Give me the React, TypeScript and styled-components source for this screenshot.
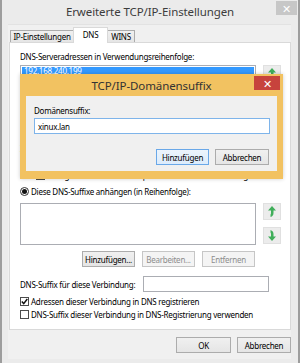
import React from "react";
import styled, { createGlobalStyle, css } from "styled-components";

const Global = createGlobalStyle`
  html, body { margin: 0; padding: 0; background: #ffffff; }
  * { box-sizing: border-box; }
`;

const FONT = `"Noto Sans", "Open Sans", sans-serif`;

const Stage = styled.div`
  position: relative;
  width: 300px;
  height: 363px;
  overflow: hidden;
  font-family: ${FONT};
  font-size: 8px;
  letter-spacing: -0.25px;
  color: #000;
`;

const Window = styled.div`
  width: 300px;
  height: 363px;
  background: #ebebeb;
  border-left: 2px solid #9d9d9d;
  border-right: 2px solid #9d9d9d;
  display: flex;
  flex-direction: column;
`;

const TitleBar = styled.div`
  height: 24px;
  flex: none;
  display: grid;
  grid-template-columns: 1fr auto 1fr;
  align-items: start;
`;

const Title = styled.div`
  grid-column: 2;
  padding-top: 4px;
  font-size: 11.5px;
  letter-spacing: -0.1px;
  line-height: 15px;
  color: #3c3c3c;
`;

const CloseBtn = styled.div<{ $active?: boolean }>`
  justify-self: end;
  display: flex;
  align-items: center;
  justify-content: center;
  color: #fff;
  font-size: 11px;
  line-height: 1;
  ${(p) =>
    p.$active
      ? css`
          width: 26px;
          height: 14px;
          margin: 2px 3px 0 0;
          background: #c7433d;
        `
      : css`
          width: 21px;
          height: 14px;
          margin: 1px 1px 0 0;
          background: #c7c7c7;
        `}
`;

const Client = styled.div`
  flex: 1;
  margin: 0 7px 4px 6px;
  background: #f0f0f0;
  border-top: 1px solid #e2e2e2;
  padding: 2px 0 0 1px;
  display: flex;
  flex-direction: column;
`;

const TabStrip = styled.div`
  height: 15px;
  display: flex;
  align-items: flex-end;
  padding-left: 1px;
  position: relative;
  z-index: 1;
`;

const Tab = styled.div<{ $selected?: boolean; $w: number }>`
  display: flex;
  align-items: center;
  justify-content: center;
  width: ${(p) => p.$w}px;
  border: 1px solid #d9d9d9;
  border-bottom: none;
  ${(p) =>
    p.$selected
      ? css`
          height: 16px;
          margin: 0 -1px -1px;
          padding-bottom: 2px;
          background: #fff;
          position: relative;
          z-index: 2;
        `
      : css`
          height: 12px;
          background: linear-gradient(#f0f0f0, #e5e5e5);
          border-color: #acacac;
        `}
`;

const Panel = styled.div`
  height: 288px;
  width: 282px;
  background: #fff;
  border: 1px solid #d9d9d9;
  padding: 0 0 0 10px;
  display: flex;
  flex-direction: column;
`;

const Text = styled.div<{ $top?: number; $disabled?: boolean; $w?: number }>`
  margin-top: ${(p) => p.$top ?? 0}px;
  line-height: 11px;
  height: 11px;
  white-space: nowrap;
  ${(p) => (p.$w ? `width: ${p.$w}px;` : "")}
  color: ${(p) => (p.$disabled ? "#8a8a8a" : "#000")};
`;

const Paragraph = styled.div<{ $top?: number }>`
  margin-top: ${(p) => p.$top ?? 0}px;
  width: 258px;
  height: 22px;
  line-height: 11px;
`;

const Row = styled.div<{ $top?: number; $indent?: number }>`
  display: flex;
  align-items: center;
  margin-top: ${(p) => p.$top ?? 0}px;
  margin-left: ${(p) => p.$indent ?? 0}px;
`;

const ListRow = styled.div<{ $top?: number }>`
  display: flex;
  margin-top: ${(p) => p.$top ?? 0}px;
  gap: 7px;
`;

const ListBox = styled.div<{ $h: number }>`
  width: 236px;
  height: ${(p) => p.$h}px;
  border: 1px solid #abadb3;
  background: #fff;
  padding: 1px;
`;

const ListItem = styled.div<{ $selected?: boolean }>`
  height: 8px;
  line-height: 8px;
  padding-left: 2px;
  font-size: 8px;
  color: ${(p) => (p.$selected ? "#fff" : "#000")};
  background: ${(p) => (p.$selected ? "#3399ff" : "transparent")};
`;

const ArrowCol = styled.div`
  display: flex;
  flex-direction: column;
  gap: 7px;
`;

const ArrowBtn = styled.div`
  width: 18px;
  height: 17px;
  background: #ececec;
  border: 1px solid #e0e0e0;
  display: flex;
  align-items: center;
  justify-content: center;
`;

const ButtonRow = styled.div<{ $top?: number; $left?: number }>`
  display: flex;
  gap: 7px;
  margin-top: ${(p) => p.$top ?? 0}px;
  margin-left: ${(p) => p.$left ?? 0}px;
`;

const Button = styled.div<{ $focused?: boolean; $disabled?: boolean; $w?: number }>`
  width: ${(p) => p.$w ?? 53}px;
  height: 16px;
  display: flex;
  align-items: center;
  justify-content: center;
  white-space: nowrap;
  border: 1px solid ${(p) => (p.$focused ? "#6aa8e8" : p.$disabled ? "#c6c6c6" : "#acacac")};
  background: ${(p) =>
    p.$disabled ? "#f4f4f4" : p.$focused ? "linear-gradient(#ecf4fc, #dcecfc)" : "linear-gradient(#f0f0f0, #e5e5e5)"};
  color: ${(p) => (p.$disabled ? "#8d8d8d" : "#000")};
`;

const Check = styled.div`
  width: 9px;
  height: 9px;
  border: 1px solid #4c4c4c;
  background: #fff;
  margin-right: 2px;
  display: flex;
  align-items: center;
  justify-content: center;
`;

const Radio = styled.div<{ $checked?: boolean }>`
  width: 9px;
  height: 9px;
  border-radius: 50%;
  border: 1px solid #333;
  background: #fff;
  margin-right: 2px;
  display: flex;
  align-items: center;
  justify-content: center;
  &::after {
    content: "";
    width: 5px;
    height: 5px;
    border-radius: 50%;
    background: ${(p) => (p.$checked ? "#111" : "transparent")};
  }
`;

const Input = styled.div<{ $w: number; $focused?: boolean; $top?: number }>`
  width: ${(p) => p.$w}px;
  height: 16px;
  margin-top: ${(p) => p.$top ?? 0}px;
  border: 1px solid ${(p) => (p.$focused ? "#7eb4ea" : "#abadb3")};
  background: #fff;
  display: flex;
  align-items: center;
  padding-left: 3px;
`;

const Footer = styled.div`
  display: flex;
  justify-content: flex-end;
  gap: 6px;
  padding-top: 7px;
  width: 282px;
`;

/* popup dialog */
const Popup = styled.div`
  position: absolute;
  left: 20px;
  top: 74px;
  width: 263px;
  height: 105px;
  background: #f2c261;
  display: flex;
  flex-direction: column;
  box-shadow: 0 0 4px rgba(0, 0, 0, 0.2);
`;

const PopupTitleBar = styled.div`
  height: 22px;
  flex: none;
  display: grid;
  grid-template-columns: 1fr auto 1fr;
  align-items: start;
`;

const PopupTitle = styled.div`
  grid-column: 2;
  padding-top: 4px;
  font-size: 11.5px;
  letter-spacing: -0.1px;
  line-height: 15px;
  color: #333;
`;

const PopupClient = styled.div`
  flex: 1;
  margin: 0 6px 8px 6px;
  background: #f0f0f0;
  padding: 5px 7px 0 8px;
  display: flex;
  flex-direction: column;
`;

const PopupButtons = styled.div`
  display: flex;
  justify-content: flex-end;
  gap: 6px;
  margin-top: 15px;
  padding-right: 1px;
`;

const UpArrow = () => (
  <svg width="8" height="11" viewBox="0 0 8 11">
    <path d="M4 0 L8 4.5 L5.5 4.5 L5.5 7 Q5.5 10 2.5 11 L2.5 8.5 Q3 8 3 7 L3 4.5 L0 4.5 Z" fill="#3fae5a" />
  </svg>
);

const DownArrow = () => (
  <svg width="8" height="11" viewBox="0 0 8 11">
    <path d="M4 11 L8 6.5 L5.5 6.5 L5.5 4 Q5.5 1 2.5 0 L2.5 2.5 Q3 3 3 4 L3 6.5 L0 6.5 Z" fill="#3fae5a" />
  </svg>
);

const Tick = () => (
  <svg width="7" height="7" viewBox="0 0 7 7">
    <path d="M0.8 3.6 L2.7 5.6 L6.3 1" stroke="#111" strokeWidth="1.5" fill="none" />
  </svg>
);

export default function App() {
  return (
    <Stage>
      <Global />
      <Window>
        <TitleBar>
          <Title>Erweiterte TCP/IP-Einstellungen</Title>
          <CloseBtn>✕</CloseBtn>
        </TitleBar>
        <Client>
          <TabStrip>
            <Tab $w={64}>IP-Einstellungen</Tab>
            <Tab $w={35} $selected>
              DNS
            </Tab>
            <Tab $w={28}>WINS</Tab>
          </TabStrip>
          <Panel>
            <Text $top={8}>DNS-Serveradressen in Verwendungsreihenfolge:</Text>
            <ListRow $top={3}>
              <ListBox $h={44}>
                <ListItem $selected>192.168.240.199</ListItem>
              </ListBox>
              <ArrowCol>
                <ArrowBtn>
                  <UpArrow />
                </ArrowBtn>
                <ArrowBtn>
                  <DownArrow />
                </ArrowBtn>
              </ArrowCol>
            </ListRow>
            <ButtonRow $top={4} $left={62}>
              <Button>Hinzufügen...</Button>
              <Button $disabled>Bearbeiten...</Button>
              <Button $disabled>Entfernen</Button>
            </ButtonRow>
            <Paragraph $top={3}>
              Die folgenden drei Einstellungen gelten für alle Verbindungen mit TCP/IP. Zur Auflösung
              unqualifizierter Namen:
            </Paragraph>
            <Row $top={2}>
              <Radio />
              <Text>Primäre und verbindungsspezifische DNS-Suffixe anhängen</Text>
            </Row>
            <Row $top={3} $indent={16}>
              <Check />
              <Text>Übergeordnete Suffixe der primären DNS-Suffixe anhängen</Text>
            </Row>
            <Row $top={5}>
              <Radio $checked />
              <Text>Diese DNS-Suffixe anhängen (in Reihenfolge):</Text>
            </Row>
            <ListRow $top={6}>
              <ListBox $h={42} />
              <ArrowCol>
                <ArrowBtn>
                  <UpArrow />
                </ArrowBtn>
                <ArrowBtn>
                  <DownArrow />
                </ArrowBtn>
              </ArrowCol>
            </ListRow>
            <ButtonRow $top={6} $left={62}>
              <Button>Hinzufügen...</Button>
              <Button $disabled>Bearbeiten...</Button>
              <Button $disabled>Entfernen</Button>
            </ButtonRow>
            <Row $top={9}>
              <Text $w={123}>DNS-Suffix für diese Verbindung:</Text>
              <Input $w={126} />
            </Row>
            <Row $top={4}>
              <Check>
                <Tick />
              </Check>
              <Text>Adressen dieser Verbindung in DNS registrieren</Text>
            </Row>
            <Row $top={2}>
              <Check />
              <Text>DNS-Suffix dieser Verbindung in DNS-Registrierung verwenden</Text>
            </Row>
          </Panel>
          <Footer>
            <Button $w={55}>OK</Button>
            <Button $w={54}>Abbrechen</Button>
          </Footer>
        </Client>
      </Window>

      <Popup>
        <PopupTitleBar>
          <PopupTitle>TCP/IP-Domänensuffix</PopupTitle>
          <CloseBtn $active>✕</CloseBtn>
        </PopupTitleBar>
        <PopupClient>
          <Text $top={4}>Domänensuffix:</Text>
          <Input $w={236} $focused $top={2}>
            xinux.lan
          </Input>
          <PopupButtons>
            <Button $focused $w={53}>
              Hinzufügen
            </Button>
            <Button $w={54}>Abbrechen</Button>
          </PopupButtons>
        </PopupClient>
      </Popup>
    </Stage>
  );
}
